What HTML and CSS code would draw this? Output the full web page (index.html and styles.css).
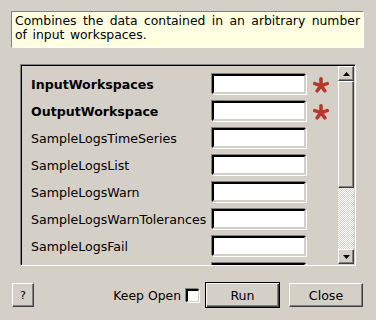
FILE: index.html
```html
<!DOCTYPE html>
<html lang="en">
<head>
    <meta charset="UTF-8">
    <title>MergeRuns</title>
    <link rel="stylesheet" href="styles.css">
</head>
<body>
    <div class="dialog">
        <div class="description">Combines the data contained in an arbitrary number of input workspaces.</div>

        <div class="params-frame">
            <div class="params">
                <div class="param-row">
                    <div class="param-label required">InputWorkspaces</div>
                    <div class="param-input"></div>
                    <svg class="star" width="16" height="16" viewBox="0 0 16 16">
                        <g stroke="#b8392b" stroke-width="3.6" stroke-linecap="round">
                            <line x1="8" y1="8.6" x2="8" y2="1.8"/>
                            <line x1="8" y1="8.6" x2="14.2" y2="6.6"/>
                            <line x1="8" y1="8.6" x2="1.8" y2="6.6"/>
                            <line x1="8" y1="8.6" x2="11.8" y2="13.8"/>
                            <line x1="8" y1="8.6" x2="4.2" y2="13.8"/>
                        </g>
                    </svg>
                </div>
                <div class="param-row">
                    <div class="param-label required">OutputWorkspace</div>
                    <div class="param-input"></div>
                    <svg class="star" width="16" height="16" viewBox="0 0 16 16">
                        <g stroke="#b8392b" stroke-width="3.6" stroke-linecap="round">
                            <line x1="8" y1="8.6" x2="8" y2="1.8"/>
                            <line x1="8" y1="8.6" x2="14.2" y2="6.6"/>
                            <line x1="8" y1="8.6" x2="1.8" y2="6.6"/>
                            <line x1="8" y1="8.6" x2="11.8" y2="13.8"/>
                            <line x1="8" y1="8.6" x2="4.2" y2="13.8"/>
                        </g>
                    </svg>
                </div>
                <div class="param-row">
                    <div class="param-label">SampleLogsTimeSeries</div>
                    <div class="param-input"></div>
                </div>
                <div class="param-row">
                    <div class="param-label">SampleLogsList</div>
                    <div class="param-input"></div>
                </div>
                <div class="param-row">
                    <div class="param-label">SampleLogsWarn</div>
                    <div class="param-input"></div>
                </div>
                <div class="param-row">
                    <div class="param-label">SampleLogsWarnTolerances</div>
                    <div class="param-input"></div>
                </div>
                <div class="param-row">
                    <div class="param-label">SampleLogsFail</div>
                    <div class="param-input"></div>
                </div>
                <div class="param-row">
                    <div class="param-label"></div>
                    <div class="param-input"></div>
                </div>
            </div>
            <div class="scrollbar">
                <div class="scroll-btn">
                    <svg width="7" height="4" viewBox="0 0 7 4"><path d="M0 4 L3.5 0 L7 4 Z" fill="#000"/></svg>
                </div>
                <div class="scroll-thumb"></div>
                <div class="scroll-track"></div>
                <div class="scroll-btn">
                    <svg width="7" height="4" viewBox="0 0 7 4"><path d="M0 0 L7 0 L3.5 4 Z" fill="#000"/></svg>
                </div>
            </div>
        </div>

        <div class="footer">
            <button class="btn btn-help">?</button>
            <div class="spacer"></div>
            <label class="keep-open">Keep Open <span class="checkbox"></span></label>
            <button class="btn btn-default">Run</button>
            <button class="btn btn-close">Close</button>
        </div>
    </div>
</body>
</html>
```

FILE: styles.css
```css
body {
    margin: 0;
    background-color: #d4d0c8;
    font-family: "DejaVu Sans", sans-serif;
    font-size: 12.4px;
    color: #000000;
}

.dialog {
    width: 376px;
    height: 320px;
    display: flex;
    flex-direction: column;
}

.description {
    margin: 11px 12px 0 11px;
    height: 37px;
    padding: 2px 3px 0 3px;
    box-sizing: border-box;
    background: #ffffe1;
    border-top: 1px solid #808080;
    border-left: 1px solid #808080;
    border-right: 1px solid #ffffff;
    border-bottom: 1px solid #ffffff;
    text-align: justify;
    word-spacing: 1.6px;
    line-height: 14px;
}

.params-frame {
    margin: 16px 20px 0 20px;
    height: 202px;
    box-sizing: border-box;
    display: flex;
    border-top: 1px solid #808080;
    border-left: 1px solid #808080;
    border-right: 1px solid #ffffff;
    border-bottom: 1px solid #ffffff;
    box-shadow: inset 1px 1px 0 #000000;
    overflow: hidden;
}

.params {
    flex: 1;
    padding: 9px 0 0 10px;
    display: flex;
    flex-direction: column;
    gap: 7px;
}

.param-row {
    display: flex;
    align-items: center;
    height: 20px;
    flex-shrink: 0;
}

.param-label {
    width: 181px;
    white-space: nowrap;
    font-size: 12.6px;
}

.param-label.required {
    font-weight: bold;
}

.param-input {
    width: 94px;
    height: 20px;
    box-sizing: border-box;
    background: #ffffff;
    border-top: 2px solid #000000;
    border-left: 2px solid #000000;
    border-right: 2px solid #d4d0c8;
    border-bottom: 2px solid #d4d0c8;
    box-shadow: -1px -1px 0 #808080, 1px 1px 0 #ffffff;
}

.star {
    margin-left: 7px;
    margin-top: 2px;
}

.scrollbar {
    width: 16px;
    margin: 1px 1px 1px 0;
    display: flex;
    flex-direction: column;
    background-color: #ffffff;
    background-image: repeating-conic-gradient(#d4d0c8 0 25%, #ffffff 0 50%);
    background-size: 2px 2px;
}

.scroll-btn,
.scroll-thumb {
    background: #d4d0c8;
    box-sizing: border-box;
    border-top: 1px solid #ffffff;
    border-left: 1px solid #ffffff;
    border-right: 1px solid #404040;
    border-bottom: 1px solid #404040;
    box-shadow: inset -1px -1px 0 #808080;
}

.scroll-btn {
    height: 15px;
    display: flex;
    align-items: center;
    justify-content: center;
}

.scroll-thumb {
    height: 107px;
}

.scroll-track {
    flex: 1;
}

.footer {
    display: flex;
    align-items: center;
    padding: 16px 13px 0 12px;
    gap: 9px;
}

.spacer {
    flex: 1;
}

.btn {
    font-family: "DejaVu Sans", sans-serif;
    font-size: 12.6px;
    color: #000000;
    background: #d4d0c8;
    box-sizing: border-box;
    height: 24px;
    padding: 0;
    border-top: 1px solid #ffffff;
    border-left: 1px solid #ffffff;
    border-right: 1px solid #404040;
    border-bottom: 1px solid #404040;
    box-shadow: inset -1px -1px 0 #808080;
}

.btn-help {
    width: 22px;
    font-size: 11px;
}

.btn-default {
    width: 75px;
    height: 26px;
    border: 1px solid #000000;
    box-shadow: inset 1px 1px 0 #ffffff, inset -1px -1px 0 #404040, inset -2px -2px 0 #808080;
}

.btn-close {
    width: 74px;
}

.keep-open {
    display: flex;
    align-items: center;
    gap: 5px;
    margin-right: -3px;
}

.checkbox {
    width: 13px;
    height: 13px;
    box-sizing: border-box;
    background: #ffffff;
    border-top: 2px solid #000000;
    border-left: 2px solid #000000;
    border-right: 1px solid #d4d0c8;
    border-bottom: 1px solid #d4d0c8;
    box-shadow: -1px -1px 0 #808080, 1px 1px 0 #ffffff;
}
```
